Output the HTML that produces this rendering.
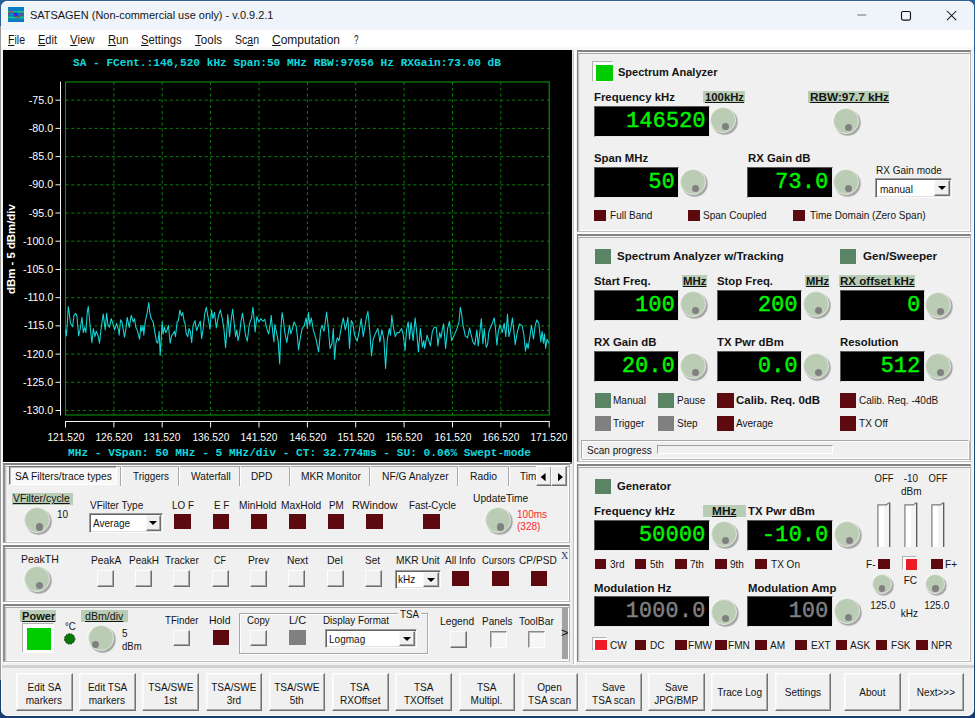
<!DOCTYPE html>
<html lang="en"><head><meta charset="utf-8"><title>SATSAGEN</title>
<style>
html,body{margin:0;padding:0}
body{width:977px;height:718px;overflow:hidden;position:relative;background:linear-gradient(#2d5e98,#1b4a80 60%,#163f6e);font-family:"Liberation Sans",sans-serif;color:#000}
body>div,.abs{position:absolute;box-sizing:border-box}
.t{white-space:nowrap;transform-origin:0 50%;color:#141414}
.t.w{color:#fff}
.seg{font-family:"Liberation Sans",sans-serif}
.mono{font-family:"Liberation Mono",monospace}
.serif{font-family:"Liberation Serif",serif}
.lstrip{left:0;top:26px;width:2px;height:654px;background:#9a9a9a}
.rstrip{left:975px;top:0;width:2px;height:718px;background:#fff}
.win{left:1px;top:1px;width:973px;height:715px;border-radius:7px;background:#f0f0f0;box-shadow:inset 0 0 0 1px #fbfbfb}
.titlebar{left:1px;top:1px;width:973px;height:29px;border-radius:7px 7px 0 0;background:#eff3fa;box-shadow:inset 0 1px 0 #fff}
.menubar{left:1px;top:30px;width:973px;height:20px;background:linear-gradient(#fff 0,#fff 16px,#f4f4f4 19px,#f0f0f0 20px)}
.panel{border-top:2px solid #828282;border-left:1px solid #828282;border-right:1px solid #b6b6b6;border-bottom:1px solid #bcbcbc;background:#f0f0f0;box-shadow:inset 0 1px 0 #f6f6f6,inset 0 2px 0 #aaa,inset 1px 0 0 #c2c2c2,inset 2px 0 0 #e6e6e6,inset -1px 0 0 #fff,inset 0 -1px 0 #fff,0 -1px 0 #fff,0 1px 0 #fafafa}
.lp{border-left:2px solid #8e8e8e}
.ipanel{border:1px solid #a8a8a8;border-right-color:#fff;border-bottom-color:#fff;box-shadow:inset 1px 1px 0 #fdfdfd,1px 1px 0 #b4b4b4}
.prog{border:1px solid #a0a0a0;border-right-color:#fff;border-bottom-color:#fff;background:#f0f0f0}
.knob{border-radius:50%;background:#bbccb5;border:1.4px solid #e2e7df;box-shadow:1.7px 1.7px 0.8px 0 #a6a6a6,-0.7px -0.7px 0 0 #f8f8f8}
.kdot{border-radius:50%;background:#808080}
.disp{background:#000;border:1px solid #5a5a5a;border-right-color:#e8e8e8;border-bottom-color:#e8e8e8;font-family:"Liberation Mono",monospace;font-weight:normal;-webkit-text-stroke:0.5px currentColor;font-size:21.6px;letter-spacing:0.3px;line-height:29px;text-align:right;overflow:hidden}
.disp span{display:inline-block;padding-right:3.2px;position:relative;top:0px}
.led{}
.ledbox{border:1px solid #b0b0b0;border-right-color:#fff;border-bottom-color:#fff;background:#fcfcfc}
.rbtn{background:#f0f0f0;border:1px solid #fdfdfd;border-right-color:#6e6e6e;border-bottom-color:#6e6e6e;box-shadow:inset -1px -1px 0 #a6a6a6}
.sbtn{background:#f6f6f6;border:1px solid #8a8a8a;border-right-color:#fff;border-bottom-color:#fff;box-shadow:inset 1px 1px 0 #bdbdbd}
.bbtn{background:#f0f0f0;border:1px solid #fdfdfd;border-right-color:#727272;border-bottom-color:#727272;box-shadow:inset -1px -1px 0 #a8a8a8,inset 1px 1px 0 #f8f8f8}
.combo{background:#fff;border:1px solid #9c9c9c;border-right-color:#fcfcfc;border-bottom-color:#fcfcfc;box-shadow:inset 1px 1px 0 #646464,inset -1px -1px 0 #e0e0e0}
.cbtn{position:absolute;right:1px;top:1px;bottom:1px;width:15.5px;background:#f0f0f0;border:1px solid #f8f8f8;border-right-color:#707070;border-bottom-color:#707070;box-shadow:inset -1px -1px 0 #a6a6a6;box-sizing:border-box}
.cbtn i{position:absolute;left:2.6px;top:5px;width:0;height:0;border-left:4.2px solid transparent;border-right:4.2px solid transparent;border-top:4.6px solid #000}
.vbar{background:#fff;border:1px solid #9a9a9a;border-right:2px solid #6c6c6c;border-bottom:none;box-shadow:inset -1px 0 0 #e0e0e0, inset 1px 1px 0 #ddd}
.tabsel{background:#f8f8f8;border:1.5px solid #707070;border-right:1px solid #fff;border-bottom:1px solid #fff;box-shadow:inset 1px 1px 0 #bcbcbc}
.tsep{border-left:1px solid #a8a8a8;border-right:1px solid #fff}
.group{border:1px solid #a8a8a8;box-shadow:inset 1px 1px 0 #fff,1px 1px 0 #fff}
</style></head>
<body>
<div class="lstrip"></div><div class="rstrip"></div>
<div class="win"></div>
<div class="titlebar"></div><div class="menubar"></div>
<svg class="abs" style="left:8px;top:7px" width="16" height="15" viewBox="0 0 16 15"><rect width="16" height="15" fill="#0a7cc4"/><rect y="4" width="16" height="1.6" fill="#10c878"/><rect y="9.6" width="16" height="1.8" fill="#10c878"/><rect x="6" y="5.6" width="3.6" height="4" fill="#1030ff"/><path d="M0.3 7.5 L1.6 4.6 L4.2 4.2 L6.5 8 L9 10 L11 11 L13.6 6 L15.6 8" fill="none" stroke="#e01820" stroke-width="0.85"/></svg>
<div class="t seg" style="left:30px;top:8.4px;font-size:11.6px;line-height:14.6px;transform:scaleX(0.9436);">SATSAGEN (Non-commercial use only) - v.0.9.2.1</div>
<svg class="abs" style="left:850px;top:5px" width="115" height="22" viewBox="0 0 115 22"><path d="M7.3 10 H16.3" stroke="#858585" stroke-width="1.2"/><rect x="51.5" y="6.5" width="9" height="8.6" rx="1.6" fill="none" stroke="#111" stroke-width="1.1"/><path d="M97 6 L106.2 15.2 M106.2 6 L97 15.2" stroke="#111" stroke-width="1.05"/></svg>
<div class="t seg" style="left:8px;top:32.6px;font-size:12px;line-height:15px;transform:scaleX(0.8792)"><u>F</u>ile</div>
<div class="t seg" style="left:38px;top:32.6px;font-size:12px;line-height:15px;transform:scaleX(0.9189)"><u>E</u>dit</div>
<div class="t seg" style="left:70px;top:32.6px;font-size:12px;line-height:15px;transform:scaleX(0.9499)"><u>V</u>iew</div>
<div class="t seg" style="left:107.5px;top:32.6px;font-size:12px;line-height:15px;transform:scaleX(0.9313)"><u>R</u>un</div>
<div class="t seg" style="left:141px;top:32.6px;font-size:12px;line-height:15px;transform:scaleX(0.9341)"><u>S</u>ettings</div>
<div class="t seg" style="left:194.5px;top:32.6px;font-size:12px;line-height:15px;transform:scaleX(0.9639)"><u>T</u>ools</div>
<div class="t seg" style="left:234.5px;top:32.6px;font-size:12px;line-height:15px;transform:scaleX(0.8775)">Sc<u>a</u>n</div>
<div class="t seg" style="left:272px;top:32.6px;font-size:12px;line-height:15px;transform:scaleX(0.9995)"><u>C</u>omputation</div>
<div class="t seg" style="left:353.5px;top:32.6px;font-size:12px;line-height:15px;transform:scaleX(0.6743)">?</div>
<div class="" style="left:3px;top:50px;width:569px;height:413px;background:#000"></div>
<svg class="abs" style="left:0;top:0" width="977" height="718" viewBox="0 0 977 718"><path d="M113.9 82 V415 M162.2 82 V415 M210.6 82 V415 M259.0 82 V415 M307.4 82 V415 M355.7 82 V415 M404.1 82 V415 M452.5 82 V415 M500.8 82 V415 M65.5 100.2 H549.2 M65.5 128.4 H549.2 M65.5 156.6 H549.2 M65.5 184.8 H549.2 M65.5 213.0 H549.2 M65.5 241.2 H549.2 M65.5 269.5 H549.2 M65.5 297.7 H549.2 M65.5 325.9 H549.2 M65.5 354.1 H549.2 M65.5 382.3 H549.2 M65.5 410.5 H549.2" stroke="#087e08" stroke-width="1" stroke-dasharray="3 2.8" fill="none"/><rect x="65.5" y="82" width="483.7" height="333" fill="none" stroke="#0c900c" stroke-width="1.1"/><path d="M60.5 81.5 V415.5 M55.5 100.2 H60.5 M55.5 128.4 H60.5 M55.5 156.6 H60.5 M55.5 184.8 H60.5 M55.5 213.0 H60.5 M55.5 241.2 H60.5 M55.5 269.5 H60.5 M55.5 297.7 H60.5 M55.5 325.9 H60.5 M55.5 354.1 H60.5 M55.5 382.3 H60.5 M55.5 410.5 H60.5 M65.0 421.5 H549.7 M65.5 421.5 V427.5 M113.9 421.5 V427.5 M162.2 421.5 V427.5 M210.6 421.5 V427.5 M259.0 421.5 V427.5 M307.4 421.5 V427.5 M355.7 421.5 V427.5 M404.1 421.5 V427.5 M452.5 421.5 V427.5 M500.8 421.5 V427.5 M549.2 421.5 V427.5" stroke="#f4f4f4" stroke-width="1" fill="none"/><path d="M65.6 329.9 L66.4 335.9 L67.3 323.3 L68.3 306.6 L69.3 313.3 L70.4 323.3 L72.6 326.6 L74.0 315.3 L75.7 313.3 L77.0 316.6 L78.6 335.9 L80.0 329.9 L82.0 317.3 L83.3 332.6 L84.6 327.3 L85.9 332.6 L87.3 311.3 L88.3 306.6 L89.5 319.3 L90.9 333.9 L91.9 342.6 L93.3 328.6 L94.9 336.6 L96.2 331.3 L97.9 335.2 L99.5 343.2 L101.3 327.3 L103.2 314.0 L105.2 329.9 L106.6 313.3 L107.9 324.6 L109.5 327.3 L111.2 318.6 L113.2 324.6 L114.6 329.9 L116.6 323.3 L118.5 329.9 L119.2 335.2 L120.5 319.9 L121.9 321.9 L124.5 337.2 L125.9 328.6 L127.2 317.3 L129.2 327.3 L131.2 315.3 L133.2 321.9 L134.5 318.6 L135.8 327.3 L137.2 329.9 L139.6 339.2 L140.9 325.3 L141.8 331.3 L143.2 325.9 L143.8 335.2 L145.2 321.9 L147.2 312.6 L148.8 302.6 L149.8 312.6 L151.2 318.6 L153.1 321.9 L155.1 333.9 L156.5 341.9 L157.8 343.2 L159.1 331.3 L160.2 355.2 L161.1 340.6 L162.2 321.9 L163.1 333.9 L164.5 327.3 L165.8 332.6 L167.1 329.9 L168.4 325.3 L170.2 343.2 L171.8 335.2 L173.1 333.9 L174.4 331.3 L175.5 336.6 L177.1 321.9 L178.4 320.6 L179.8 310.0 L181.4 315.9 L182.7 312.6 L184.4 322.6 L185.0 323.3 L186.3 333.9 L187.7 336.6 L189.0 328.6 L190.3 331.3 L191.7 342.6 L193.0 325.9 L195.0 320.6 L196.7 330.6 L198.3 325.9 L200.3 321.3 L201.6 338.6 L203.0 329.9 L204.7 314.0 L206.3 307.3 L208.3 318.6 L210.0 329.3 L211.6 310.0 L212.9 318.6 L214.5 312.6 L216.3 327.9 L218.3 316.6 L220.3 310.0 L222.3 318.6 L223.9 328.6 L225.6 347.9 L226.9 329.9 L227.8 314.6 L229.6 336.6 L230.9 321.9 L232.6 309.3 L234.2 323.3 L235.6 336.6 L236.9 329.9 L238.0 340.6 L239.6 333.9 L240.9 321.9 L242.5 313.3 L244.2 324.6 L245.5 335.2 L247.3 341.2 L248.9 327.3 L250.2 321.3 L251.5 318.6 L252.9 307.3 L254.2 319.3 L255.1 331.9 L256.9 316.6 L258.9 321.9 L260.8 318.6 L262.8 321.3 L264.8 319.3 L266.8 328.6 L268.6 333.9 L270.2 324.6 L271.2 315.3 L272.8 332.6 L273.9 341.9 L274.8 324.6 L276.8 333.9 L278.1 340.6 L279.7 363.9 L280.8 329.9 L282.1 312.6 L283.5 320.6 L284.8 332.6 L286.8 342.6 L288.1 333.9 L289.5 325.3 L290.8 333.9 L292.5 328.6 L294.1 321.9 L296.1 325.9 L297.4 336.6 L298.5 349.9 L300.1 339.2 L302.1 328.6 L304.1 325.9 L306.1 317.9 L307.4 328.6 L308.5 312.6 L309.8 324.6 L311.3 317.9 L313.3 329.9 L316.0 339.2 L318.6 351.9 L320.6 329.9 L322.0 325.3 L324.0 331.3 L325.3 321.9 L326.6 312.0 L328.0 324.6 L330.0 348.5 L332.0 343.2 L333.3 328.6 L334.6 359.2 L335.9 343.2 L337.3 337.9 L339.0 340.6 L341.3 327.3 L343.3 317.9 L345.3 329.9 L346.6 324.6 L347.9 317.3 L349.5 348.5 L351.3 320.6 L352.8 323.3 L354.6 335.2 L357.2 341.2 L359.2 331.3 L361.2 318.6 L363.2 336.6 L364.6 328.6 L366.6 316.6 L367.9 311.3 L369.6 328.6 L371.5 355.9 L373.2 339.2 L375.2 333.9 L377.9 328.6 L379.9 341.9 L381.9 329.9 L383.9 339.2 L385.6 368.5 L387.2 340.6 L389.2 328.6 L390.5 335.2 L391.8 315.3 L393.2 325.9 L395.2 336.6 L397.2 332.6 L399.2 332.6 L401.6 328.6 L403.1 333.9 L405.1 350.5 L406.5 329.9 L408.2 321.9 L409.5 339.2 L411.1 322.6 L413.1 340.6 L415.1 317.9 L416.5 329.9 L418.4 351.9 L420.4 328.6 L422.4 347.2 L423.8 340.6 L424.7 348.5 L427.1 335.2 L430.4 345.9 L432.4 331.3 L434.4 327.3 L436.3 327.3 L437.9 345.9 L439.7 332.6 L441.0 337.9 L442.3 329.9 L443.6 323.9 L445.6 348.5 L447.6 328.6 L449.4 321.3 L451.6 340.6 L453.6 336.6 L457.0 328.6 L459.0 321.9 L460.3 307.3 L461.6 314.0 L462.9 324.6 L465.3 335.9 L467.6 337.9 L469.6 327.9 L470.9 333.9 L472.9 341.9 L474.9 344.6 L476.9 329.9 L478.2 345.9 L480.0 331.3 L481.3 318.6 L482.9 343.9 L484.2 328.6 L486.2 347.2 L487.6 344.6 L488.9 331.3 L491.6 325.3 L494.2 317.9 L495.5 328.6 L496.9 345.2 L498.2 332.6 L499.9 324.6 L502.2 332.6 L504.2 323.3 L505.8 336.6 L507.5 314.0 L508.9 336.6 L510.8 328.6 L512.4 317.9 L513.8 329.9 L515.2 344.6 L517.2 332.6 L519.5 323.9 L522.2 325.9 L523.9 335.2 L525.5 351.2 L526.8 343.2 L528.1 348.5 L530.1 335.2 L531.5 325.3 L533.5 339.2 L535.1 325.9 L536.8 319.9 L538.8 323.3 L540.8 341.9 L542.1 331.3 L543.4 343.2 L544.4 333.9 L545.7 348.5 L547.0 339.2 L548.8 343.2" stroke="#14d8da" stroke-width="1.05" fill="none" stroke-linejoin="round"/></svg>
<div class="t w" style="left:28.4px;top:92.7px;font-size:11px;line-height:14px;transform-origin:100% 50%;transform:scaleX(0.97)">-75.0</div>
<div class="t w" style="left:28.4px;top:120.9px;font-size:11px;line-height:14px;transform-origin:100% 50%;transform:scaleX(0.97)">-80.0</div>
<div class="t w" style="left:28.4px;top:149.1px;font-size:11px;line-height:14px;transform-origin:100% 50%;transform:scaleX(0.97)">-85.0</div>
<div class="t w" style="left:28.4px;top:177.3px;font-size:11px;line-height:14px;transform-origin:100% 50%;transform:scaleX(0.97)">-90.0</div>
<div class="t w" style="left:28.4px;top:205.5px;font-size:11px;line-height:14px;transform-origin:100% 50%;transform:scaleX(0.97)">-95.0</div>
<div class="t w" style="left:22.3px;top:233.8px;font-size:11px;line-height:14px;transform-origin:100% 50%;transform:scaleX(0.97)">-100.0</div>
<div class="t w" style="left:22.3px;top:262.0px;font-size:11px;line-height:14px;transform-origin:100% 50%;transform:scaleX(0.97)">-105.0</div>
<div class="t w" style="left:23.1px;top:290.2px;font-size:11px;line-height:14px;transform-origin:100% 50%;transform:scaleX(0.97)">-110.0</div>
<div class="t w" style="left:23.1px;top:318.4px;font-size:11px;line-height:14px;transform-origin:100% 50%;transform:scaleX(0.97)">-115.0</div>
<div class="t w" style="left:22.3px;top:346.6px;font-size:11px;line-height:14px;transform-origin:100% 50%;transform:scaleX(0.97)">-120.0</div>
<div class="t w" style="left:22.3px;top:374.8px;font-size:11px;line-height:14px;transform-origin:100% 50%;transform:scaleX(0.97)">-125.0</div>
<div class="t w" style="left:22.3px;top:403.0px;font-size:11px;line-height:14px;transform-origin:100% 50%;transform:scaleX(0.97)">-130.0</div>
<div class="t" style="left:45.6px;top:429.6px;font-size:11px;line-height:14px;transform-origin:50% 50%;transform:scaleX(0.9300);color:#fff;">121.520</div>
<div class="t" style="left:94.0px;top:429.6px;font-size:11px;line-height:14px;transform-origin:50% 50%;transform:scaleX(0.9300);color:#fff;">126.520</div>
<div class="t" style="left:142.4px;top:429.6px;font-size:11px;line-height:14px;transform-origin:50% 50%;transform:scaleX(0.9300);color:#fff;">131.520</div>
<div class="t" style="left:190.7px;top:429.6px;font-size:11px;line-height:14px;transform-origin:50% 50%;transform:scaleX(0.9300);color:#fff;">136.520</div>
<div class="t" style="left:239.1px;top:429.6px;font-size:11px;line-height:14px;transform-origin:50% 50%;transform:scaleX(0.9300);color:#fff;">141.520</div>
<div class="t" style="left:287.5px;top:429.6px;font-size:11px;line-height:14px;transform-origin:50% 50%;transform:scaleX(0.9300);color:#fff;">146.520</div>
<div class="t" style="left:335.8px;top:429.6px;font-size:11px;line-height:14px;transform-origin:50% 50%;transform:scaleX(0.9300);color:#fff;">151.520</div>
<div class="t" style="left:384.2px;top:429.6px;font-size:11px;line-height:14px;transform-origin:50% 50%;transform:scaleX(0.9300);color:#fff;">156.520</div>
<div class="t" style="left:432.6px;top:429.6px;font-size:11px;line-height:14px;transform-origin:50% 50%;transform:scaleX(0.9300);color:#fff;">161.520</div>
<div class="t" style="left:481.0px;top:429.6px;font-size:11px;line-height:14px;transform-origin:50% 50%;transform:scaleX(0.9300);color:#fff;">166.520</div>
<div class="t" style="left:529.3px;top:429.6px;font-size:11px;line-height:14px;transform-origin:50% 50%;transform:scaleX(0.9300);color:#fff;">171.520</div>
<div class="t w" style="left:11.2px;top:248.6px;font-size:11px;line-height:14px;font-weight:bold;transform-origin:0 0;transform:translate(-7px,45px) rotate(-90deg) scaleX(1.035)">dBm - 5 dBm/div</div>
<div class="t mono" style="left:73px;top:55.9px;font-size:11px;line-height:14px;transform:scaleX(1.0130);font-weight:bold;color:#10d8dc;">SA - FCent.:146,520 kHz Span:50 MHz RBW:97656 Hz RXGain:73.00 dB</div>
<div class="t mono" style="left:68px;top:446.2px;font-size:11px;line-height:14px;transform:scaleX(1.0164);font-weight:bold;color:#10d8dc;">MHz - VSpan: 50 MHz - 5 MHz/div - CT: 32.774ms - SU: 0.06% Swept-mode</div>
<div class="" style="left:572px;top:50px;width:1px;height:614px;background:#e4e4e4"></div>
<div class="" style="left:573px;top:50px;width:1px;height:614px;background:#c4c4c4"></div>
<div class="" style="left:574px;top:50px;width:2px;height:616px;background:#fff"></div>
<div class="panel" style="left:577px;top:50px;width:394px;height:182px;"></div>
<div class="panel" style="left:577px;top:234px;width:394px;height:228px;"></div>
<div class="panel" style="left:577px;top:464px;width:394px;height:198px;"></div>
<div class="ledbox" style="left:592px;top:61px;width:21px;height:21px;"></div>
<div class="" style="left:595.5px;top:65px;width:17px;height:16px;background:#00cc00"></div>
<div class="t" style="left:617.5px;top:65.2px;font-size:11px;line-height:14px;transform:scaleX(1.0027);font-weight:bold;">Spectrum Analyzer</div>
<div class="t" style="left:594.3px;top:89.6px;font-size:11px;line-height:14px;transform:scaleX(1.0340);font-weight:bold;">Frequency kHz</div>
<div class="" style="left:702.7px;top:90.8px;width:42.3px;height:12.1px;background:#b9ccb5"></div>
<div class="t" style="left:704.5px;top:89.6px;font-size:11px;line-height:14px;transform:scaleX(1.0287);font-weight:bold;text-decoration:underline;">100kHz</div>
<div class="" style="left:808.2px;top:90.8px;width:81.3px;height:12.1px;background:#b9ccb5"></div>
<div class="t" style="left:809.5px;top:89.6px;font-size:11px;line-height:14px;transform:scaleX(1.0711);font-weight:bold;text-decoration:underline;">RBW:97.7 kHz</div>
<div class="disp" style="left:594px;top:105.5px;width:116px;height:31px;color:#00f400"><span>146520</span></div>
<div class="knob" style="left:710.3px;top:107.3px;width:26px;height:26px"></div>
<div class="kdot" style="left:721.9px;top:123.3px;width:7.2px;height:7.2px"></div>
<div class="knob" style="left:833px;top:107.5px;width:26px;height:26px"></div>
<div class="kdot" style="left:844.6px;top:123.5px;width:7.2px;height:7.2px"></div>
<div class="t" style="left:594.3px;top:151.3px;font-size:11px;line-height:14px;transform:scaleX(1.0300);font-weight:bold;">Span MHz</div>
<div class="disp" style="left:594px;top:166.6px;width:85.3px;height:31px;color:#00f400"><span>50</span></div>
<div class="knob" style="left:680.4px;top:168.5px;width:26px;height:26px"></div>
<div class="kdot" style="left:692.0px;top:184.5px;width:7.2px;height:7.2px"></div>
<div class="t" style="left:747.8px;top:151.1px;font-size:11px;line-height:14px;transform:scaleX(1.0300);font-weight:bold;">RX Gain dB</div>
<div class="disp" style="left:747.3px;top:166.6px;width:85.3px;height:31px;color:#00f400"><span>73.0</span></div>
<div class="knob" style="left:833.1px;top:169.1px;width:26px;height:26px"></div>
<div class="kdot" style="left:844.7px;top:185.1px;width:7.2px;height:7.2px"></div>
<div class="t" style="left:875.9px;top:162.6px;font-size:11px;line-height:14px;transform:scaleX(0.9120);">RX Gain mode</div>
<div class="combo" style="left:875.4px;top:178.4px;width:76.4px;height:20px"><div class="cbtn"><i></i></div></div>
<div class="t" style="left:880px;top:181.5px;font-size:11px;line-height:14px;transform:scaleX(0.9120);">manual</div>
<div class="led" style="left:594.3px;top:209.8px;width:11.6px;height:10.8px;background:#5c0a10"></div>
<div class="t" style="left:609.6px;top:208.3px;font-size:11px;line-height:14px;transform:scaleX(0.9120);">Full Band</div>
<div class="led" style="left:688.3px;top:209.8px;width:11.6px;height:10.8px;background:#5c0a10"></div>
<div class="t" style="left:703.4px;top:208.3px;font-size:11px;line-height:14px;transform:scaleX(0.9120);">Span Coupled</div>
<div class="led" style="left:793.4px;top:209.8px;width:11.6px;height:10.8px;background:#5c0a10"></div>
<div class="t" style="left:809.6px;top:208.3px;font-size:11px;line-height:14px;transform:scaleX(0.9120);">Time Domain (Zero Span)</div>
<div class="led" style="left:594.5px;top:248.8px;width:16.5px;height:15px;background:#5a8464"></div>
<div class="t" style="left:617px;top:248.6px;font-size:11px;line-height:14px;transform:scaleX(1.0481);font-weight:bold;">Spectrum Analyzer w/Tracking</div>
<div class="led" style="left:839.9px;top:248.8px;width:16.5px;height:15px;background:#5a8464"></div>
<div class="t" style="left:862.6px;top:248.6px;font-size:11px;line-height:14px;transform:scaleX(1.0633);font-weight:bold;">Gen/Sweeper</div>
<div class="t" style="left:594.3px;top:273.8px;font-size:11px;line-height:14px;transform:scaleX(1.0300);font-weight:bold;">Start Freq.</div>
<div class="" style="left:681.6px;top:274.6px;width:25.2px;height:12.2px;background:#b9ccb5"></div>
<div class="t" style="left:682.6px;top:273.8px;font-size:11px;line-height:14px;transform:scaleX(1.0351);font-weight:bold;text-decoration:underline;">MHz</div>
<div class="disp" style="left:594px;top:289.5px;width:85.3px;height:31px;color:#00f400"><span>100</span></div>
<div class="knob" style="left:680.4px;top:291.2px;width:26px;height:26px"></div>
<div class="kdot" style="left:692.0px;top:307.2px;width:7.2px;height:7.2px"></div>
<div class="t" style="left:717px;top:273.8px;font-size:11px;line-height:14px;transform:scaleX(1.0300);font-weight:bold;">Stop Freq.</div>
<div class="" style="left:804.5px;top:274.6px;width:24.8px;height:12.2px;background:#b9ccb5"></div>
<div class="t" style="left:805.5px;top:273.8px;font-size:11px;line-height:14px;transform:scaleX(1.0218);font-weight:bold;text-decoration:underline;">MHz</div>
<div class="disp" style="left:716.6px;top:289.5px;width:85.3px;height:31px;color:#00f400"><span>200</span></div>
<div class="knob" style="left:803.4px;top:291.3px;width:26px;height:26px"></div>
<div class="kdot" style="left:815.0px;top:307.3px;width:7.2px;height:7.2px"></div>
<div class="" style="left:838.9px;top:274.6px;width:76.2px;height:12.2px;background:#b9ccb5"></div>
<div class="t" style="left:839.9px;top:273.8px;font-size:11px;line-height:14px;transform:scaleX(1.0523);font-weight:bold;text-decoration:underline;">RX offset kHz</div>
<div class="disp" style="left:839.5px;top:289.5px;width:85.3px;height:31px;color:#00f400"><span>0</span></div>
<div class="knob" style="left:925.3px;top:291.5px;width:26px;height:26px"></div>
<div class="kdot" style="left:936.9px;top:307.5px;width:7.2px;height:7.2px"></div>
<div class="t" style="left:594.3px;top:334.6px;font-size:11px;line-height:14px;transform:scaleX(1.0300);font-weight:bold;">RX Gain dB</div>
<div class="disp" style="left:594px;top:351px;width:85.3px;height:31px;color:#00f400"><span>20.0</span></div>
<div class="knob" style="left:680.4px;top:353.1px;width:26px;height:26px"></div>
<div class="kdot" style="left:692.0px;top:369.1px;width:7.2px;height:7.2px"></div>
<div class="t" style="left:717px;top:334.6px;font-size:11px;line-height:14px;transform:scaleX(1.0300);font-weight:bold;">TX Pwr dBm</div>
<div class="disp" style="left:716.6px;top:351px;width:85.3px;height:31px;color:#00f400"><span>0.0</span></div>
<div class="knob" style="left:803.4px;top:353.1px;width:26px;height:26px"></div>
<div class="kdot" style="left:815.0px;top:369.1px;width:7.2px;height:7.2px"></div>
<div class="t" style="left:840px;top:334.6px;font-size:11px;line-height:14px;transform:scaleX(1.0300);font-weight:bold;">Resolution</div>
<div class="disp" style="left:839.5px;top:351px;width:85.3px;height:31px;color:#00f400"><span>512</span></div>
<div class="knob" style="left:925.3px;top:353.1px;width:26px;height:26px"></div>
<div class="kdot" style="left:936.9px;top:369.1px;width:7.2px;height:7.2px"></div>
<div class="led" style="left:594.5px;top:392.6px;width:16.5px;height:15px;background:#5a8464"></div>
<div class="t" style="left:613.4px;top:393.0px;font-size:11px;line-height:14px;transform:scaleX(0.9120);">Manual</div>
<div class="led" style="left:657.9px;top:392.6px;width:16.5px;height:15px;background:#5a8464"></div>
<div class="t" style="left:676.8px;top:393.0px;font-size:11px;line-height:14px;transform:scaleX(0.9120);">Pause</div>
<div class="led" style="left:717px;top:392.6px;width:16.5px;height:15px;background:#5c0a10"></div>
<div class="t" style="left:736.1px;top:393.0px;font-size:11px;line-height:14px;transform:scaleX(1.0425);font-weight:bold;">Calib. Req. 0dB</div>
<div class="led" style="left:839.9px;top:392.6px;width:16.5px;height:15px;background:#5c0a10"></div>
<div class="t" style="left:858.6px;top:393.0px;font-size:11px;line-height:14px;transform:scaleX(0.9120);">Calib. Req. -40dB</div>
<div class="led" style="left:594.5px;top:415.6px;width:16.5px;height:15px;background:#808080"></div>
<div class="t" style="left:613.4px;top:416.1px;font-size:11px;line-height:14px;transform:scaleX(0.9120);">Trigger</div>
<div class="led" style="left:657.9px;top:415.6px;width:16.5px;height:15px;background:#808080"></div>
<div class="t" style="left:676.8px;top:416.1px;font-size:11px;line-height:14px;transform:scaleX(0.9120);">Step</div>
<div class="led" style="left:717px;top:415.6px;width:16.5px;height:15px;background:#5c0a10"></div>
<div class="t" style="left:735.5px;top:416.1px;font-size:11px;line-height:14px;transform:scaleX(0.9120);">Average</div>
<div class="led" style="left:839.9px;top:415.6px;width:16.5px;height:15px;background:#5c0a10"></div>
<div class="t" style="left:858.6px;top:416.1px;font-size:11px;line-height:14px;transform:scaleX(0.9120);">TX Off</div>
<div class="ipanel" style="left:581px;top:440px;width:388px;height:19px;"></div>
<div class="t" style="left:586.5px;top:442.5px;font-size:11px;line-height:14px;transform:scaleX(0.9120);">Scan progress</div>
<div class="prog" style="left:657.2px;top:445.4px;width:176px;height:8.2px;"></div>
<div class="led" style="left:594.5px;top:478.8px;width:16.5px;height:15px;background:#5a8464"></div>
<div class="t" style="left:617px;top:479.0px;font-size:11px;line-height:14px;transform:scaleX(1.0300);font-weight:bold;">Generator</div>
<div class="t" style="left:594.3px;top:503.8px;font-size:11px;line-height:14px;transform:scaleX(1.0340);font-weight:bold;">Frequency kHz</div>
<div class="" style="left:703px;top:504.6px;width:43px;height:12.2px;background:#b9ccb5"></div>
<div class="t" style="left:711.6px;top:503.8px;font-size:11px;line-height:14px;transform:scaleX(1.0793);font-weight:bold;text-decoration:underline;">MHz</div>
<div class="disp" style="left:594px;top:519.8px;width:115.6px;height:31px;color:#00f400"><span>50000</span></div>
<div class="knob" style="left:710.6px;top:521.3px;width:26px;height:26px"></div>
<div class="kdot" style="left:722.2px;top:537.3px;width:7.2px;height:7.2px"></div>
<div class="t" style="left:748px;top:503.8px;font-size:11px;line-height:14px;transform:scaleX(1.0300);font-weight:bold;">TX Pwr dBm</div>
<div class="disp" style="left:747.3px;top:519.8px;width:85.3px;height:31px;color:#00f400"><span>-10.0</span></div>
<div class="knob" style="left:834px;top:521.1px;width:26px;height:26px"></div>
<div class="kdot" style="left:845.6px;top:537.1px;width:7.2px;height:7.2px"></div>
<div class="led" style="left:594.5px;top:558.5px;width:11.6px;height:10.8px;background:#5c0a10"></div>
<div class="t" style="left:609.6px;top:557.0px;font-size:11px;line-height:14px;transform:scaleX(0.9120);">3rd</div>
<div class="led" style="left:634.8px;top:558.5px;width:11.6px;height:10.8px;background:#5c0a10"></div>
<div class="t" style="left:650px;top:557.0px;font-size:11px;line-height:14px;transform:scaleX(0.9120);">5th</div>
<div class="led" style="left:675px;top:558.5px;width:11.6px;height:10.8px;background:#5c0a10"></div>
<div class="t" style="left:690px;top:557.0px;font-size:11px;line-height:14px;transform:scaleX(0.9120);">7th</div>
<div class="led" style="left:715.2px;top:558.5px;width:11.6px;height:10.8px;background:#5c0a10"></div>
<div class="t" style="left:729.8px;top:557.0px;font-size:11px;line-height:14px;transform:scaleX(0.9120);">9th</div>
<div class="led" style="left:755.4px;top:558.5px;width:11.6px;height:10.8px;background:#5c0a10"></div>
<div class="t" style="left:771px;top:557.0px;font-size:11px;line-height:14px;transform:scaleX(0.9120);">TX On</div>
<div class="t" style="left:594.3px;top:580.6px;font-size:11px;line-height:14px;transform:scaleX(1.0300);font-weight:bold;">Modulation Hz</div>
<div class="disp" style="left:594px;top:596.2px;width:115.6px;height:31px;color:#808080"><span>1000.0</span></div>
<div class="knob" style="left:710.6px;top:598.5px;width:26px;height:26px"></div>
<div class="kdot" style="left:722.2px;top:614.5px;width:7.2px;height:7.2px"></div>
<div class="t" style="left:748px;top:580.6px;font-size:11px;line-height:14px;transform:scaleX(1.0300);font-weight:bold;">Modulation Amp</div>
<div class="disp" style="left:747.3px;top:596.2px;width:85.3px;height:31px;color:#808080"><span>100</span></div>
<div class="knob" style="left:833.7px;top:597.5px;width:26px;height:26px"></div>
<div class="kdot" style="left:845.3px;top:613.5px;width:7.2px;height:7.2px"></div>
<div class="ledbox" style="left:592.4px;top:637px;width:15px;height:14px;"></div>
<div class="led" style="left:595.4px;top:639.7px;width:11.6px;height:10.8px;background:#ee1c24"></div>
<div class="t" style="left:609.6px;top:638.3px;font-size:11px;line-height:14px;transform:scaleX(0.9120);">CW</div>
<div class="led" style="left:634.8px;top:639.7px;width:11.6px;height:10.8px;background:#5c0a10"></div>
<div class="t" style="left:650px;top:638.3px;font-size:11px;line-height:14px;transform:scaleX(0.9120);">DC</div>
<div class="led" style="left:675px;top:639.7px;width:11.6px;height:10.8px;background:#5c0a10"></div>
<div class="t" style="left:687.9px;top:638.3px;font-size:11px;line-height:14px;transform:scaleX(0.9120);">FMW</div>
<div class="led" style="left:715.2px;top:639.7px;width:11.6px;height:10.8px;background:#5c0a10"></div>
<div class="t" style="left:728.2px;top:638.3px;font-size:11px;line-height:14px;transform:scaleX(0.9120);">FMN</div>
<div class="led" style="left:755.4px;top:639.7px;width:11.6px;height:10.8px;background:#5c0a10"></div>
<div class="t" style="left:770px;top:638.3px;font-size:11px;line-height:14px;transform:scaleX(0.9120);">AM</div>
<div class="led" style="left:795.4px;top:639.7px;width:11.6px;height:10.8px;background:#5c0a10"></div>
<div class="t" style="left:810.7px;top:638.3px;font-size:11px;line-height:14px;transform:scaleX(0.9120);">EXT</div>
<div class="led" style="left:835.7px;top:639.7px;width:11.6px;height:10.8px;background:#5c0a10"></div>
<div class="t" style="left:850px;top:638.3px;font-size:11px;line-height:14px;transform:scaleX(0.9120);">ASK</div>
<div class="led" style="left:875.9px;top:639.7px;width:11.6px;height:10.8px;background:#5c0a10"></div>
<div class="t" style="left:890.8px;top:638.3px;font-size:11px;line-height:14px;transform:scaleX(0.9120);">FSK</div>
<div class="led" style="left:916.2px;top:639.7px;width:11.6px;height:10.8px;background:#5c0a10"></div>
<div class="t" style="left:931.4px;top:638.3px;font-size:11px;line-height:14px;transform:scaleX(0.9120);">NPR</div>
<div class="t" style="left:873.2px;top:471.2px;font-size:11px;line-height:14px;transform-origin:50% 50%;transform:scaleX(0.8600);">OFF</div>
<div class="t" style="left:903.0px;top:471.2px;font-size:11px;line-height:14px;transform-origin:50% 50%;transform:scaleX(0.9000);">-10</div>
<div class="t" style="left:926.7px;top:471.2px;font-size:11px;line-height:14px;transform-origin:50% 50%;transform:scaleX(0.8600);">OFF</div>
<div class="t" style="left:899.6px;top:483.9px;font-size:11px;line-height:14px;transform-origin:50% 50%;transform:scaleX(0.9120);">dBm</div>
<svg class="abs" style="left:877.4px;top:501.6px" width="14" height="46" viewBox="0 0 14 46"><rect x="1" y="3" width="6.4" height="42" fill="#fff"/><rect x="7.4" y="3" width="4.4" height="42" fill="#f3f3f3"/><path d="M0.9 45 V2.9 H9.4 L11.8 0.8" fill="none" stroke="#7c7c7c" stroke-width="1.2"/><path d="M12.7 0.6 V45" stroke="#4c4c4c" stroke-width="1.2"/></svg>
<svg class="abs" style="left:904.3px;top:501.6px" width="14" height="46" viewBox="0 0 14 46"><rect x="1" y="3" width="6.4" height="42" fill="#fff"/><rect x="7.4" y="3" width="4.4" height="42" fill="#f3f3f3"/><path d="M0.9 45 V2.9 H9.4 L11.8 0.8" fill="none" stroke="#7c7c7c" stroke-width="1.2"/><path d="M12.7 0.6 V45" stroke="#4c4c4c" stroke-width="1.2"/></svg>
<svg class="abs" style="left:931.2px;top:501.6px" width="14" height="46" viewBox="0 0 14 46"><rect x="1" y="3" width="6.4" height="42" fill="#fff"/><rect x="7.4" y="3" width="4.4" height="42" fill="#f3f3f3"/><path d="M0.9 45 V2.9 H9.4 L11.8 0.8" fill="none" stroke="#7c7c7c" stroke-width="1.2"/><path d="M12.7 0.6 V45" stroke="#4c4c4c" stroke-width="1.2"/></svg>
<div class="t" style="left:866.4px;top:557.0px;font-size:11px;line-height:14px;transform:scaleX(0.9120);">F-</div>
<div class="led" style="left:878px;top:558.6px;width:11.6px;height:10.8px;background:#5c0a10"></div>
<div class="ledbox" style="left:902.4px;top:556.4px;width:15px;height:14px;"></div>
<div class="led" style="left:905.6px;top:559.4px;width:11.6px;height:10.8px;background:#ee1c24"></div>
<div class="led" style="left:931.4px;top:558.6px;width:11.6px;height:10.8px;background:#5c0a10"></div>
<div class="t" style="left:944.8px;top:557.0px;font-size:11px;line-height:14px;transform:scaleX(0.9120);">F+</div>
<div class="t" style="left:903.2px;top:573.1px;font-size:11px;line-height:14px;transform-origin:50% 50%;transform:scaleX(0.9120);">FC</div>
<div class="knob" style="left:871.7px;top:573.8px;width:20px;height:20px"></div>
<div class="kdot" style="left:878.8px;top:585.2px;width:6.4px;height:6.4px"></div>
<div class="knob" style="left:925.3px;top:573.8px;width:20px;height:20px"></div>
<div class="kdot" style="left:932.4px;top:585.2px;width:6.4px;height:6.4px"></div>
<div class="t" style="left:869.3px;top:597.8px;font-size:11px;line-height:14px;transform-origin:50% 50%;transform:scaleX(0.9120);">125.0</div>
<div class="t" style="left:922.8px;top:597.8px;font-size:11px;line-height:14px;transform-origin:50% 50%;transform:scaleX(0.9120);">125.0</div>
<div class="t" style="left:900.1px;top:605.8px;font-size:11px;line-height:14px;transform-origin:50% 50%;transform:scaleX(0.9120);">kHz</div>
<div class="" style="left:3px;top:462px;width:569px;height:2px;background:#767676"></div>
<div class="panel lp" style="left:3px;top:463px;width:567px;height:80px;"></div>
<div class="panel lp" style="left:3px;top:545px;width:567px;height:57px;"></div>
<div class="panel lp" style="left:3px;top:604px;width:567px;height:58px;"></div>
<div class="tabsel" style="left:9px;top:466px;width:107.5px;height:18.5px;"></div>
<div class="t" style="left:15.4px;top:468.5px;font-size:11px;line-height:14px;transform:scaleX(0.9315);">SA Filters/trace types</div>
<div class="tsep" style="left:120.3px;top:466px;width:2px;height:19.5px;"></div>
<div class="tsep" style="left:178.2px;top:466px;width:2px;height:19.5px;"></div>
<div class="tsep" style="left:239px;top:466px;width:2px;height:19.5px;"></div>
<div class="tsep" style="left:289.2px;top:466px;width:2px;height:19.5px;"></div>
<div class="tsep" style="left:369.2px;top:466px;width:2px;height:19.5px;"></div>
<div class="tsep" style="left:457.3px;top:466px;width:2px;height:19.5px;"></div>
<div class="tsep" style="left:507.5px;top:466px;width:2px;height:19.5px;"></div>
<div class="t" style="left:133px;top:468.5px;font-size:11px;line-height:14px;transform:scaleX(0.8990);">Triggers</div>
<div class="t" style="left:190.5px;top:468.5px;font-size:11px;line-height:14px;transform:scaleX(0.9258);">Waterfall</div>
<div class="t" style="left:251px;top:468.5px;font-size:11px;line-height:14px;transform:scaleX(0.9171);">DPD</div>
<div class="t" style="left:300.5px;top:468.5px;font-size:11px;line-height:14px;transform:scaleX(0.9318);">MKR Monitor</div>
<div class="t" style="left:381.6px;top:468.5px;font-size:11px;line-height:14px;transform:scaleX(0.9312);">NF/G Analyzer</div>
<div class="t" style="left:469.7px;top:468.5px;font-size:11px;line-height:14px;transform:scaleX(0.9395);">Radio</div>
<div class="t" style="left:519.8px;top:468.5px;font-size:11px;line-height:14px;transform:scaleX(0.9041);">Tim</div>
<div class="rbtn" style="left:535.6px;top:466.3px;width:16px;height:19.5px;"></div>
<div class="rbtn" style="left:551.4px;top:466.3px;width:16px;height:19.5px;"></div>
<svg class="abs" style="left:535.6px;top:466.3px" width="32" height="20" viewBox="0 0 32 20"><path d="M9.6 6.9 V15.3 L4.6 11.1 Z M22 6.9 V15.3 L27 11.1 Z" fill="#000"/></svg>
<div class="" style="left:11.7px;top:492.5px;width:61px;height:12.3px;background:#b9ccb5"></div>
<div class="t" style="left:13.3px;top:491.4px;font-size:11px;line-height:14px;transform:scaleX(0.9466);text-decoration:underline;">VFilter/cycle</div>
<div class="knob" style="left:24.3px;top:507.4px;width:26px;height:26px"></div>
<div class="kdot" style="left:35.9px;top:523.4px;width:7.2px;height:7.2px"></div>
<div class="t" style="left:56.7px;top:506.8px;font-size:11px;line-height:14px;transform:scaleX(0.9120);">10</div>
<div class="t" style="left:89.5px;top:497.5px;font-size:11px;line-height:14px;transform:scaleX(0.9097);">VFilter Type</div>
<div class="combo" style="left:89px;top:513.4px;width:74px;height:19.4px"><div class="cbtn"><i></i></div></div>
<div class="t" style="left:92.5px;top:516.2px;font-size:11px;line-height:14px;transform:scaleX(0.9120);">Average</div>
<div class="led" style="left:174px;top:514.3px;width:16.5px;height:15px;background:#5c0a10"></div>
<div class="t" style="left:171.5px;top:497.5px;font-size:11px;line-height:14px;transform:scaleX(0.8958);">LO F</div>
<div class="led" style="left:212.5px;top:514.3px;width:16.5px;height:15px;background:#5c0a10"></div>
<div class="t" style="left:213.5px;top:497.5px;font-size:11px;line-height:14px;transform:scaleX(0.9000);">E F</div>
<div class="led" style="left:250.8px;top:514.3px;width:16.5px;height:15px;background:#5c0a10"></div>
<div class="t" style="left:238.7px;top:497.5px;font-size:11px;line-height:14px;transform:scaleX(0.9245);">MinHold</div>
<div class="led" style="left:289.3px;top:514.3px;width:16.5px;height:15px;background:#5c0a10"></div>
<div class="t" style="left:280.7px;top:497.5px;font-size:11px;line-height:14px;transform:scaleX(0.9285);">MaxHold</div>
<div class="led" style="left:327.6px;top:514.3px;width:16.5px;height:15px;background:#5c0a10"></div>
<div class="t" style="left:328.8px;top:497.5px;font-size:11px;line-height:14px;transform:scaleX(0.8909);">PM</div>
<div class="led" style="left:366px;top:514.3px;width:16.5px;height:15px;background:#5c0a10"></div>
<div class="t" style="left:351.7px;top:497.5px;font-size:11px;line-height:14px;transform:scaleX(0.9708);">RWindow</div>
<div class="led" style="left:423.4px;top:514.3px;width:16.5px;height:15px;background:#5c0a10"></div>
<div class="t" style="left:409.3px;top:497.5px;font-size:11px;line-height:14px;transform:scaleX(0.8923);">Fast-Cycle</div>
<div class="t" style="left:472.5px;top:491.4px;font-size:11px;line-height:14px;transform:scaleX(0.9294);">UpdateTime</div>
<div class="knob" style="left:485.1px;top:507.4px;width:26px;height:26px"></div>
<div class="kdot" style="left:496.7px;top:523.4px;width:7.2px;height:7.2px"></div>
<div class="t" style="left:516.7px;top:506.8px;font-size:11px;line-height:14px;transform:scaleX(0.9120);color:#ff2828;">100ms</div>
<div class="t" style="left:516.7px;top:519.4px;font-size:11px;line-height:14px;transform:scaleX(0.9120);color:#ff2828;">(328)</div>
<div class="t" style="left:20.5px;top:551.6px;font-size:11px;line-height:14px;transform:scaleX(0.9513);">PeakTH</div>
<div class="knob" style="left:23.9px;top:565.8px;width:26px;height:26px"></div>
<div class="kdot" style="left:35.5px;top:581.8px;width:7.2px;height:7.2px"></div>
<div class="rbtn" style="left:96.6px;top:570.2px;width:17px;height:16.5px;"></div>
<div class="t" style="left:90.5px;top:553.3px;font-size:11px;line-height:14px;transform:scaleX(0.9349);">PeakA</div>
<div class="rbtn" style="left:135.1px;top:570.2px;width:17px;height:16.5px;"></div>
<div class="t" style="left:129px;top:553.3px;font-size:11px;line-height:14px;transform:scaleX(0.9087);">PeakH</div>
<div class="rbtn" style="left:173.2px;top:570.2px;width:17px;height:16.5px;"></div>
<div class="t" style="left:164.8px;top:553.3px;font-size:11px;line-height:14px;transform:scaleX(0.9167);">Tracker</div>
<div class="rbtn" style="left:211.5px;top:570.2px;width:17px;height:16.5px;"></div>
<div class="t" style="left:214px;top:553.3px;font-size:11px;line-height:14px;transform:scaleX(0.8048);">CF</div>
<div class="rbtn" style="left:250px;top:570.2px;width:17px;height:16.5px;"></div>
<div class="t" style="left:248.3px;top:553.3px;font-size:11px;line-height:14px;transform:scaleX(0.9329);">Prev</div>
<div class="rbtn" style="left:288.3px;top:570.2px;width:17px;height:16.5px;"></div>
<div class="t" style="left:286.6px;top:553.3px;font-size:11px;line-height:14px;transform:scaleX(0.9329);">Next</div>
<div class="rbtn" style="left:326.6px;top:570.2px;width:17px;height:16.5px;"></div>
<div class="t" style="left:326.7px;top:553.3px;font-size:11px;line-height:14px;transform:scaleX(0.9573);">Del</div>
<div class="rbtn" style="left:365px;top:570.2px;width:17px;height:16.5px;"></div>
<div class="t" style="left:365.4px;top:553.3px;font-size:11px;line-height:14px;transform:scaleX(0.9085);">Set</div>
<div class="t" style="left:395.8px;top:553.3px;font-size:11px;line-height:14px;transform:scaleX(0.9265);">MKR Unit</div>
<div class="combo" style="left:395.4px;top:569.6px;width:45.2px;height:19.4px"><div class="cbtn"><i></i></div></div>
<div class="t" style="left:398.4px;top:572.4px;font-size:11px;line-height:14px;transform:scaleX(0.9120);">kHz</div>
<div class="led" style="left:452px;top:570.6px;width:16.5px;height:15px;background:#5c0a10"></div>
<div class="t" style="left:444.5px;top:553.3px;font-size:11px;line-height:14px;transform:scaleX(0.9129);">All Info</div>
<div class="led" style="left:492.2px;top:570.6px;width:16.5px;height:15px;background:#5c0a10"></div>
<div class="t" style="left:482px;top:553.3px;font-size:11px;line-height:14px;transform:scaleX(0.8597);">Cursors</div>
<div class="led" style="left:530.5px;top:570.6px;width:16.5px;height:15px;background:#5c0a10"></div>
<div class="t" style="left:518.8px;top:553.3px;font-size:11px;line-height:14px;transform:scaleX(0.9205);">CP/PSD</div>
<div class="t serif" style="left:561.2px;top:548.7px;font-size:10px;line-height:13px;transform:scaleX(1.0045);color:#26385c;">X</div>
<div class="" style="left:19.9px;top:610.2px;width:36px;height:12.2px;background:#b9ccb5"></div>
<div class="t" style="left:21.5px;top:609.1px;font-size:11px;line-height:14px;transform:scaleX(1.0057);font-weight:bold;text-decoration:underline;">Power</div>
<div class="ledbox" style="left:22px;top:623.4px;width:31.6px;height:29.3px;"></div>
<div class="" style="left:26.6px;top:627.6px;width:24px;height:22.5px;background:#00cc00"></div>
<div class="t" style="left:64.5px;top:618.8px;font-size:11px;line-height:14px;transform:scaleX(0.8750);">°C</div>
<svg class="abs" style="left:63px;top:632px" width="14" height="14" viewBox="0 0 14 14"><circle cx="6.7" cy="6.9" r="5.2" fill="#057805" stroke="#063806" stroke-width="1" stroke-dasharray="1.6 1.2"/></svg>
<div class="" style="left:81.3px;top:610.2px;width:47.1px;height:12.2px;background:#b9ccb5"></div>
<div class="t" style="left:85.4px;top:609.1px;font-size:11px;line-height:14px;transform:scaleX(0.9664);text-decoration:underline;">dBm/div</div>
<div class="knob" style="left:88.1px;top:625.4px;width:26px;height:26px"></div>
<div class="kdot" style="left:91.5px;top:641.2px;width:7.2px;height:7.2px"></div>
<div class="t" style="left:122.2px;top:626.4px;font-size:11px;line-height:14px;transform:scaleX(0.9120);">5</div>
<div class="t" style="left:122.2px;top:639.2px;font-size:11px;line-height:14px;transform:scaleX(0.8710);">dBm</div>
<div class="t" style="left:164.8px;top:613.2px;font-size:11px;line-height:14px;transform:scaleX(0.8814);">TFinder</div>
<div class="rbtn" style="left:173px;top:629.5px;width:17px;height:16.5px;"></div>
<div class="t" style="left:208.8px;top:613.2px;font-size:11px;line-height:14px;transform:scaleX(0.9504);">Hold</div>
<div class="led" style="left:212.5px;top:630px;width:16.5px;height:15px;background:#5c0a10"></div>
<div class="group" style="left:238.5px;top:613.3px;width:189.2px;height:41px;"></div>
<div class="t" style="left:246.7px;top:613.2px;font-size:11px;line-height:14px;transform:scaleX(0.8840);">Copy</div>
<div class="rbtn" style="left:250px;top:629.5px;width:17px;height:16.5px;"></div>
<div class="t" style="left:288.9px;top:613.2px;font-size:11px;line-height:14px;transform:scaleX(0.9990);">L/C</div>
<div class="led" style="left:289.3px;top:630px;width:16.5px;height:15px;background:#808080"></div>
<div class="t" style="left:323px;top:613.2px;font-size:11px;line-height:14px;transform:scaleX(0.8924);">Display Format</div>
<div class="combo" style="left:324.7px;top:628.6px;width:92px;height:19.6px"><div class="cbtn"><i></i></div></div>
<div class="t" style="left:328.8px;top:631.5px;font-size:11px;line-height:14px;transform:scaleX(0.9120);">Logmag</div>
<div class="" style="left:398px;top:608px;width:23px;height:12px;background:#f0f0f0"></div>
<div class="t" style="left:399.9px;top:606.7px;font-size:11px;line-height:14px;transform:scaleX(0.8881);">TSA</div>
<div class="t" style="left:440px;top:614.2px;font-size:11px;line-height:14px;transform:scaleX(0.9318);">Legend</div>
<div class="rbtn" style="left:450.2px;top:631.1px;width:17px;height:16.5px;"></div>
<div class="t" style="left:482px;top:614.2px;font-size:11px;line-height:14px;transform:scaleX(0.9039);">Panels</div>
<div class="sbtn" style="left:490px;top:631.1px;width:17px;height:16.5px;"></div>
<div class="t" style="left:519.2px;top:614.2px;font-size:11px;line-height:14px;transform:scaleX(0.9331);">ToolBar</div>
<div class="sbtn" style="left:528.4px;top:631.1px;width:17px;height:16.5px;"></div>
<div class="" style="left:561.5px;top:607.2px;width:6.4px;height:52.2px;background:#a2a2a2"></div>
<div class="t" style="left:561px;top:625.4px;font-size:13px;line-height:16px;transform:scaleX(0.9746);">&gt;</div>
<div class="" style="left:2px;top:664.6px;width:972px;height:3px;background:#d2d2d2"></div>
<div class="bbtn" style="left:16px;top:673.3px;width:56.6px;height:38.2px;"></div>
<div class="t" style="left:25.7px;top:679.6px;font-size:11px;line-height:14px;transform-origin:50% 50%;transform:scaleX(0.9120);">Edit SA</div>
<div class="t" style="left:24.1px;top:692.6px;font-size:11px;line-height:14px;transform-origin:50% 50%;transform:scaleX(0.9120);">markers</div>
<div class="bbtn" style="left:79.2px;top:673.3px;width:56.6px;height:38.2px;"></div>
<div class="t" style="left:85.6px;top:679.6px;font-size:11px;line-height:14px;transform-origin:50% 50%;transform:scaleX(0.9120);">Edit TSA</div>
<div class="t" style="left:87.3px;top:692.6px;font-size:11px;line-height:14px;transform-origin:50% 50%;transform:scaleX(0.9120);">markers</div>
<div class="bbtn" style="left:142.4px;top:673.3px;width:56.6px;height:38.2px;"></div>
<div class="t" style="left:145.6px;top:679.6px;font-size:11px;line-height:14px;transform-origin:50% 50%;transform:scaleX(0.9120);">TSA/SWE</div>
<div class="t" style="left:163.1px;top:692.6px;font-size:11px;line-height:14px;transform-origin:50% 50%;transform:scaleX(0.9120);">1st</div>
<div class="bbtn" style="left:205.7px;top:673.3px;width:56.6px;height:38.2px;"></div>
<div class="t" style="left:208.9px;top:679.6px;font-size:11px;line-height:14px;transform-origin:50% 50%;transform:scaleX(0.9120);">TSA/SWE</div>
<div class="t" style="left:225.8px;top:692.6px;font-size:11px;line-height:14px;transform-origin:50% 50%;transform:scaleX(0.9120);">3rd</div>
<div class="bbtn" style="left:268.9px;top:673.3px;width:56.6px;height:38.2px;"></div>
<div class="t" style="left:272.1px;top:679.6px;font-size:11px;line-height:14px;transform-origin:50% 50%;transform:scaleX(0.9120);">TSA/SWE</div>
<div class="t" style="left:289.3px;top:692.6px;font-size:11px;line-height:14px;transform-origin:50% 50%;transform:scaleX(0.9120);">5th</div>
<div class="bbtn" style="left:332.1px;top:673.3px;width:56.6px;height:38.2px;"></div>
<div class="t" style="left:349.4px;top:679.6px;font-size:11px;line-height:14px;transform-origin:50% 50%;transform:scaleX(0.9120);">TSA</div>
<div class="t" style="left:337.9px;top:692.6px;font-size:11px;line-height:14px;transform-origin:50% 50%;transform:scaleX(0.9120);">RXOffset</div>
<div class="bbtn" style="left:395.3px;top:673.3px;width:56.6px;height:38.2px;"></div>
<div class="t" style="left:412.6px;top:679.6px;font-size:11px;line-height:14px;transform-origin:50% 50%;transform:scaleX(0.9120);">TSA</div>
<div class="t" style="left:401.7px;top:692.6px;font-size:11px;line-height:14px;transform-origin:50% 50%;transform:scaleX(0.9120);">TXOffset</div>
<div class="bbtn" style="left:458.5px;top:673.3px;width:56.6px;height:38.2px;"></div>
<div class="t" style="left:475.8px;top:679.6px;font-size:11px;line-height:14px;transform-origin:50% 50%;transform:scaleX(0.9120);">TSA</div>
<div class="t" style="left:469.1px;top:692.6px;font-size:11px;line-height:14px;transform-origin:50% 50%;transform:scaleX(0.9120);">Multipl.</div>
<div class="bbtn" style="left:521.8px;top:673.3px;width:56.6px;height:38.2px;"></div>
<div class="t" style="left:536.3px;top:679.6px;font-size:11px;line-height:14px;transform-origin:50% 50%;transform:scaleX(0.9120);">Open</div>
<div class="t" style="left:526.3px;top:692.6px;font-size:11px;line-height:14px;transform-origin:50% 50%;transform:scaleX(0.9120);">TSA scan</div>
<div class="bbtn" style="left:585px;top:673.3px;width:56.6px;height:38.2px;"></div>
<div class="t" style="left:600.5px;top:679.6px;font-size:11px;line-height:14px;transform-origin:50% 50%;transform:scaleX(0.9120);">Save</div>
<div class="t" style="left:589.5px;top:692.6px;font-size:11px;line-height:14px;transform-origin:50% 50%;transform:scaleX(0.9120);">TSA scan</div>
<div class="bbtn" style="left:648.2px;top:673.3px;width:56.6px;height:38.2px;"></div>
<div class="t" style="left:663.7px;top:679.6px;font-size:11px;line-height:14px;transform-origin:50% 50%;transform:scaleX(0.9120);">Save</div>
<div class="t" style="left:652.1px;top:692.6px;font-size:11px;line-height:14px;transform-origin:50% 50%;transform:scaleX(0.9120);">JPG/BMP</div>
<div class="bbtn" style="left:711.4px;top:673.3px;width:56.6px;height:38.2px;"></div>
<div class="t" style="left:714.8px;top:685.4px;font-size:11px;line-height:14px;transform-origin:50% 50%;transform:scaleX(0.9120);">Trace Log</div>
<div class="bbtn" style="left:774.6px;top:673.3px;width:56.6px;height:38.2px;"></div>
<div class="t" style="left:782.7px;top:685.4px;font-size:11px;line-height:14px;transform-origin:50% 50%;transform:scaleX(0.9120);">Settings</div>
<div class="bbtn" style="left:844.2px;top:673.3px;width:56.6px;height:38.2px;"></div>
<div class="t" style="left:857.8px;top:685.4px;font-size:11px;line-height:14px;transform-origin:50% 50%;transform:scaleX(0.9120);">About</div>
<div class="bbtn" style="left:907.9px;top:673.3px;width:56.6px;height:38.2px;"></div>
<div class="t" style="left:915.0px;top:685.4px;font-size:11px;line-height:14px;transform-origin:50% 50%;transform:scaleX(0.9120);">Next&gt;&gt;&gt;</div>
</body></html>
